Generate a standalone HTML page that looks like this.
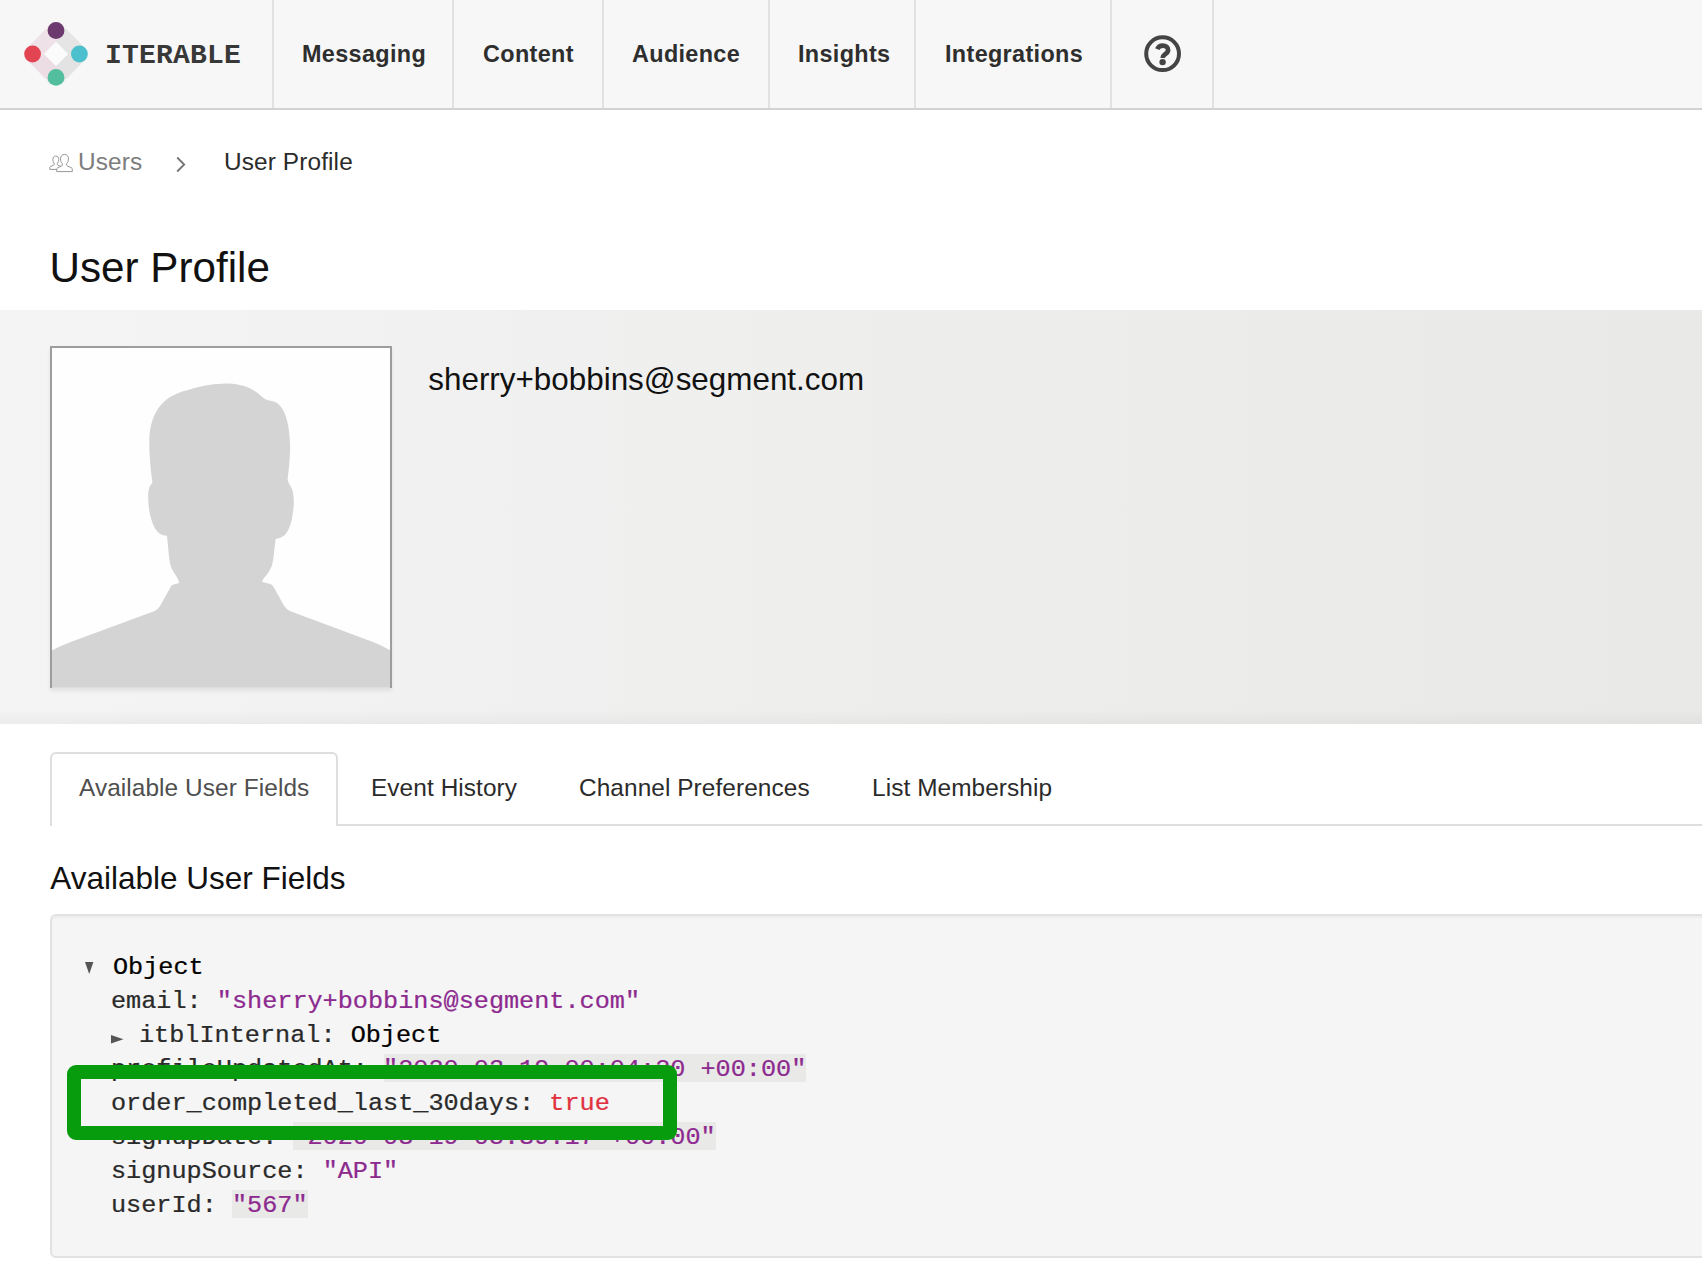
<!DOCTYPE html>
<html lang="en">
<head>
<meta charset="utf-8">
<title>User Profile</title>
<style>
html,body{margin:0;padding:0;}
body{width:1702px;height:1276px;overflow:hidden;background:#fff;position:relative;
  font-family:"Liberation Sans",sans-serif;color:#111;}
.abs{position:absolute;white-space:nowrap;line-height:1;}
/* nav */
#nav{position:absolute;left:0;top:0;width:1702px;height:108px;background:#f7f7f7;border-bottom:2px solid #d2d2d2;}
.sep{position:absolute;top:0;width:2px;height:108px;background:#e1e1e1;}
.navt{font-weight:bold;color:#2e2e2e;font-size:23.4px;top:42.6px;letter-spacing:0.35px;}
#logo-text{font-family:"Liberation Mono",monospace;font-weight:bold;color:#383838;font-size:28px;left:105px;top:42px;letter-spacing:0.2px;}
/* breadcrumb */
.bc{font-size:24.4px;top:150.4px;letter-spacing:0.12px;}
/* band */
#band{position:absolute;left:0;top:310px;width:1702px;height:414px;
  background:linear-gradient(90deg,#f4f4f4 0%,#f1f1f1 25%,#eeeeed 50%,#ebebea 75%,#e9e9e8 100%);}
#band:after{content:"";position:absolute;left:0;right:0;bottom:0;height:14px;background:linear-gradient(180deg,rgba(0,0,0,0),rgba(0,0,0,.035));}
#avatar{position:absolute;left:50px;top:346px;width:338px;height:339.700px;border:2px solid #9d9d9d;border-bottom:none;background:#fefefe;box-shadow:0 3px 4px rgba(0,0,0,.07);overflow:hidden;}
/* tabs */
#tabline{position:absolute;left:336px;top:824px;width:1366px;height:2px;background:#dedede;}
#tab{position:absolute;left:50px;top:752px;width:284px;height:72px;border:2px solid #dedede;border-bottom:none;border-radius:6px 6px 0 0;background:#fff;box-sizing:content-box;}
.tt{font-size:24.4px;top:776.300px;color:#2b2b2b;letter-spacing:0.08px;}
/* panel */
#panel{position:absolute;left:50px;top:914px;width:1700px;height:340px;border:2px solid #e2e2e2;border-radius:6px;background:#f5f5f5;box-shadow:inset 0 2px 2px rgba(0,0,0,.04);}
.code{font-family:"Liberation Mono",monospace;font-size:25.2px;color:#2a2a2a;transform:scaleY(0.93);transform-origin:0 19.3px;-webkit-text-stroke:0.25px currentColor;}
.k{color:#2a2a2a;}
.s{color:#8d2a8f;}
.hl{}
.hb{position:absolute;height:27.5px;background:#e9e9e8;}
.o{color:#000;}
.b{color:#e0323f;}
#green{position:absolute;left:67px;top:1065px;width:582px;height:47px;border:14px solid #069c0e;border-radius:9px;}
</style>
</head>
<body>
<div id="nav">
  <div class="sep" style="left:272px"></div>
  <div class="sep" style="left:452px"></div>
  <div class="sep" style="left:602px"></div>
  <div class="sep" style="left:768px"></div>
  <div class="sep" style="left:914px"></div>
  <div class="sep" style="left:1110px"></div>
  <div class="sep" style="left:1212px"></div>
  <svg class="abs" style="left:20px;top:18px" width="72" height="72" viewBox="20 18 72 72">
    <g stroke-width="16.6" stroke-linecap="butt" fill="none">
      <line x1="56" y1="30.5" x2="79.4" y2="54" stroke="#e5e5e5"/>
      <line x1="79.4" y1="54" x2="56" y2="77.4" stroke="#e3e3e3"/>
      <line x1="56" y1="77.4" x2="32.6" y2="54" stroke="#ecdde4"/>
      <line x1="32.6" y1="54" x2="56" y2="30.5" stroke="#efe1e8"/>
    </g>
    <polygon points="56,42 68,54 56,66 44,54" fill="#fbfbfb"/>
    <circle cx="56" cy="30.5" r="8.4" fill="#6c3a6f"/>
    <circle cx="32.6" cy="54" r="8.4" fill="#e34452"/>
    <circle cx="79.4" cy="54" r="8.4" fill="#4dc0cd"/>
    <circle cx="56" cy="77.4" r="8.4" fill="#52be9d"/>
  </svg>
  <span class="abs" id="logo-text">ITERABLE</span>
  <span class="abs navt" style="left:302px">Messaging</span>
  <span class="abs navt" style="left:483px">Content</span>
  <span class="abs navt" style="left:632px">Audience</span>
  <span class="abs navt" style="left:798px">Insights</span>
  <span class="abs navt" style="left:945px">Integrations</span>
  <svg class="abs" style="left:1142px;top:33px" width="42" height="42" viewBox="0 0 42 42">
    <circle cx="20.6" cy="20.7" r="16.4" fill="none" stroke="#444" stroke-width="4"/>
    <path d="M15.300 16.200C16.200 13.800 18.200 12.600 20.800 12.600C24 12.600 26.100 14.400 26.100 16.900C26.100 19.100 24.700 20.100 23.200 21.200C21.600 22.400 20.700 23.200 20.700 24.900" fill="none" stroke="#444" stroke-width="4.700"/>
    <circle cx="20.600" cy="29.100" r="3.200" fill="#444"/>
  </svg>
</div>

<!-- breadcrumb -->
<svg class="abs" style="left:49px;top:153px" width="25" height="20" viewBox="0 0 25 20">
  <g fill="#fff" stroke="#979797" stroke-width="1" stroke-linejoin="round">
    <path d="M6.800 3C8.600 3 9.800 4.500 9.800 6.600C9.800 8.200 9.200 9.400 8.400 10.200V11.500C8.400 11.900 8.600 12.100 9 12.300L12 13.400V16.400H0.800V14.600C0.800 14 1.100 13.500 1.700 13.300L4.600 12.300C5 12.100 5.200 11.900 5.200 11.500V10.200C4.400 9.400 3.800 8.200 3.800 6.600C3.800 4.500 5 3 6.800 3Z"/>
    <path d="M15.500 1.400C17.900 1.400 19.500 3.200 19.500 5.900C19.500 7.900 18.700 9.500 17.700 10.500V12.100C17.700 12.600 18 12.900 18.500 13.100L22.300 14.700C23 15 23.300 15.600 23.300 16.400V18.600H7.700V16.400C7.700 15.600 8 15 8.700 14.700L12.500 13.100C13 12.900 13.300 12.600 13.300 12.100V10.500C12.300 9.500 11.500 7.900 11.500 5.900C11.500 3.200 13.100 1.400 15.500 1.400Z"/>
  </g>
</svg>
<span class="abs bc" style="left:78px;color:#7d7d7d">Users</span>
<svg class="abs" style="left:174px;top:153px" width="14" height="20" viewBox="0 0 14 20"><path d="M3.200 4.500l7 7-7 7" fill="none" stroke="#747474" stroke-width="1.800"/></svg>
<span class="abs bc" style="left:224px;color:#2b2b2b">User Profile</span>

<span class="abs" id="title" style="left:49.5px;top:247.300px;font-size:42.2px;color:#111">User Profile</span>

<div id="band"></div>
<div id="avatar">
  <svg width="338" height="339.700" viewBox="42 42 1185 1191" preserveAspectRatio="none" style="display:block">
    <path fill="#d4d4d4" d="M37 1233V1105C60 1092 85 1082 110 1072L395 967C408 962 415 956 422 945L455 885C460 874 466 870 478 869L488 866C486 852 478 842 470 830C460 815 455 800 453 780L445 700C425 700 412 690 402 672C388 645 382 615 380 585C379 565 378 545 384 530C387 522 392 520 394 514C388 470 383 420 383 370C383 320 395 275 425 240C450 212 480 200 515 190C555 178 595 167 640 167C680 166 715 172 745 188C765 198 775 212 790 222C805 228 822 228 835 238C855 255 865 285 870 315C876 350 878 385 876 420C874 455 870 485 868 505C872 520 882 528 886 545C892 570 890 600 885 630C880 660 872 685 855 700C845 708 835 708 826 712L818 780C816 800 810 815 800 830C792 842 782 850 778 862L800 868C812 870 816 875 822 885L855 945C862 956 870 962 883 967L1165 1072C1190 1082 1212 1092 1232 1105V1233Z"/>
  </svg>
</div>
<span class="abs" id="email" style="left:428.300px;top:364px;font-size:31.4px;color:#111">sherry+bobbins@segment.com</span>

<!-- tabs -->
<div id="tabline"></div>
<div id="tab"></div>
<span class="abs tt" style="left:79px;color:#4f4f4f">Available User Fields</span>
<span class="abs tt" style="left:371px">Event History</span>
<span class="abs tt" style="left:579px">Channel Preferences</span>
<span class="abs tt" style="left:872px">List Membership</span>

<span class="abs" id="h2" style="left:50.300px;top:862.500px;font-size:31.5px;color:#111">Available User Fields</span>

<div id="panel"></div>
<div class="hb" style="left:383.500px;top:1054px;width:422px"></div>
<div class="hb" style="left:292.500px;top:1122px;width:423.500px"></div>
<div class="hb" style="left:232px;top:1190px;width:75.600px"></div>
<svg class="abs" style="left:85px;top:962px" width="9" height="12" viewBox="0 0 9 12"><path d="M0 0h8.400L4.200 12z" fill="#555"/></svg>
<svg class="abs" style="left:111px;top:1034.500px" width="13" height="9" viewBox="0 0 13 9"><path d="M0 0v8.400L12.400 4.200z" fill="#555"/></svg>
<span class="abs code o" style="left:113px;top:955px">Object</span>
<span class="abs code" style="left:111px;top:989px"><span class="k">email: </span><span class="s">"sherry+bobbins@segment.com"</span></span>
<span class="abs code" style="left:139px;top:1023px"><span class="k">itblInternal: </span><span class="o">Object</span></span>
<span class="abs code" style="left:111px;top:1057px"><span class="k">profileUpdatedAt: </span><span class="s hl">"2020-03-19 00:04:20 +00:00"</span></span>
<span class="abs code" style="left:111px;top:1091px"><span class="k">order_completed_last_30days: </span><span class="b">true</span></span>
<span class="abs code" style="left:111px;top:1125px"><span class="k">signupDate: </span><span class="s hl">"2020-03-19 05:39:17 +00:00"</span></span>
<span class="abs code" style="left:111px;top:1159px"><span class="k">signupSource: </span><span class="s">"API"</span></span>
<span class="abs code" style="left:111px;top:1193px"><span class="k">userId: </span><span class="s hl">"567"</span></span>
<div id="green"></div>
</body>
</html>
